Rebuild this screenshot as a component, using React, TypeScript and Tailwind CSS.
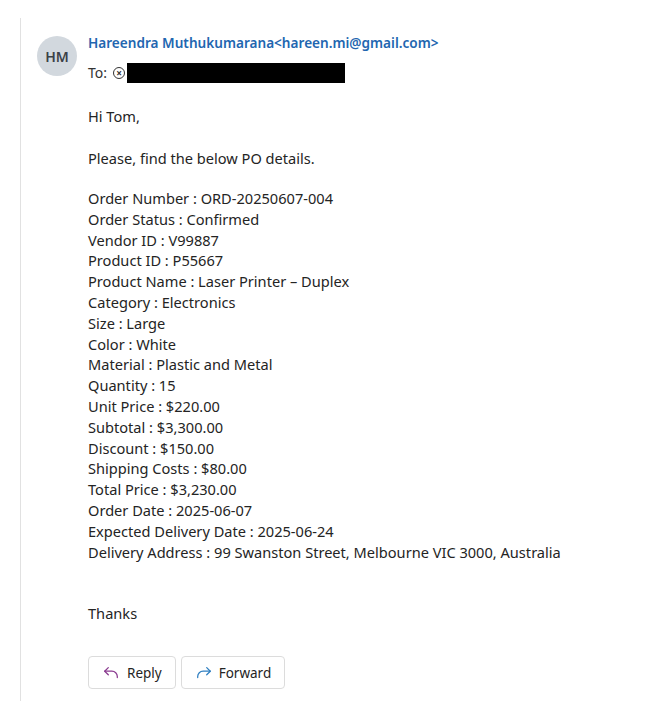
import { useState } from "react";

const lines = [
  "Order Number : ORD-20250607-004",
  "Order Status : Confirmed",
  "Vendor ID : V99887",
  "Product ID : P55667",
  "Product Name : Laser Printer – Duplex",
  "Category : Electronics",
  "Size : Large",
  "Color : White",
  "Material : Plastic and Metal",
  "Quantity : 15",
  "Unit Price : $220.00",
  "Subtotal : $3,300.00",
  "Discount : $150.00",
  "Shipping Costs : $80.00",
  "Total Price : $3,230.00",
  "Order Date : 2025-06-07",
  "Expected Delivery Date : 2025-06-24",
  "Delivery Address : 99 Swanston Street, Melbourne VIC 3000, Australia",
];

function ReplyIcon() {
  return (
    <svg width="18" height="18" viewBox="0 0 20 20" fill="none" stroke="#8a3a8f" strokeWidth="1.4" strokeLinecap="round" strokeLinejoin="round">
      <path d="M7 4 3 8l4 4" />
      <path d="M3 8h8a6 6 0 0 1 6 6v1" />
    </svg>
  );
}

function ForwardIcon() {
  return (
    <svg width="18" height="18" viewBox="0 0 20 20" fill="none" stroke="#2f7fc1" strokeWidth="1.4" strokeLinecap="round" strokeLinejoin="round">
      <path d="M13 4l4 4-4 4" />
      <path d="M17 8H9a6 6 0 0 0-6 6v1" />
    </svg>
  );
}

export default function App() {
  const [open] = useState(true);
  return (
    <div className="w-[657px] h-[720px] bg-white pt-[18px] pl-5" style={{ fontFamily: '"Noto Sans", "Open Sans", sans-serif' }}>
      <div className="border-l border-[#e1e1e1] h-[683px] flex pl-4">
        <div className="pt-[18px]">
          <div className="w-10 h-10 rounded-full bg-[#d2d8de] flex items-center justify-center text-[14px] font-semibold text-[#3b4148]">
            HM
          </div>
        </div>
        <div className="pl-[11px] pt-[16px] flex-1">
          <div className="text-[13.6px] text-[#2266b0] font-semibold leading-[18px]">
            Hareendra Muthukumarana&lt;hareen.mi@gmail.com&gt;
          </div>
          <div className="flex items-center mt-[11px] text-[14px] text-[#333] leading-[18px]">
            <span>To:</span>
            <span className="ml-[6px] w-[12px] h-[12px] rounded-full border-[1.5px] border-[#333] flex items-center justify-center text-[10px] font-bold leading-none">×</span>
            <span className="ml-[2px] w-[218px] h-[20px] bg-black" />
          </div>
          {open && (
            <div className="text-[14.6px] text-[#242424] leading-[21px] mt-[23px]">
              <p>Hi Tom,</p>
              <p className="mt-[21px]">Please, find the below PO details.</p>
              <div className="mt-[19px]">
                {lines.map((l) => (
                  <p key={l} className="leading-[20.8px]">{l}</p>
                ))}
              </div>
              <p className="mt-[41px]">Thanks</p>
            </div>
          )}
          <div className="flex gap-[5px] mt-[32px]">
            <button className="h-[33px] px-[13px] flex items-center gap-[7px] border border-[#dcdcdc] rounded-[4px] text-[13.5px] text-[#242424]">
              <ReplyIcon />
              Reply
            </button>
            <button className="h-[33px] px-[13px] flex items-center gap-[6px] border border-[#dcdcdc] rounded-[4px] text-[13.5px] text-[#242424]">
              <ForwardIcon />
              Forward
            </button>
          </div>
        </div>
      </div>
    </div>
  );
}
